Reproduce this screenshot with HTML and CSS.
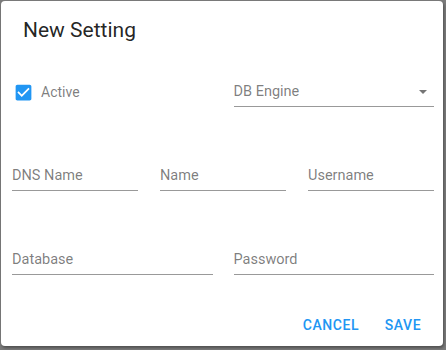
FILE: index.html
```html
<!DOCTYPE html>
<html>
<head>
<meta charset="utf-8">
<link rel="stylesheet" href="styles.css">
</head>
<body>
<div class="dialog">
  <h2 class="title">New Setting</h2>
  <div class="content">
    <div class="row two">
      <label class="check">
        <svg class="check-icon" viewBox="0 0 24 24" width="21" height="21"><path fill="#2196f3" d="M19 3H5c-1.11 0-2 .9-2 2v14c0 1.1.89 2 2 2h14c1.11 0 2-.9 2-2V5c0-1.1-.89-2-2-2zm-9 14l-5-5 1.41-1.41L10 14.17l7.59-7.59L19 8l-9 9z"/></svg>
        <span class="check-label">Active</span>
      </label>
      <div class="field select">
        <span class="placeholder">DB Engine</span>
        <svg class="arrow" viewBox="0 0 10 5" width="8" height="4"><path d="M0 0l5 5 5-5z" fill="rgba(0,0,0,0.54)"/></svg>
      </div>
    </div>
    <div class="row three">
      <div class="field"><span class="placeholder">DNS Name</span></div>
      <div class="field"><span class="placeholder">Name</span></div>
      <div class="field"><span class="placeholder">Username</span></div>
    </div>
    <div class="row two">
      <div class="field"><span class="placeholder">Database</span></div>
      <div class="field"><span class="placeholder">Password</span></div>
    </div>
  </div>
  <div class="actions">
    <button class="btn">Cancel</button>
    <button class="btn">Save</button>
  </div>
</div>
</body>
</html>
```
FILE: styles.css
```css
html, body {
  margin: 0;
  padding: 0;
}
body {
  background: #7b7b7b;
  width: 446px;
  height: 350px;
  overflow: hidden;
  font-family: Roboto, "Liberation Sans", sans-serif;
}
.dialog {
  margin: 1px 0 0 1px;
  width: 442px;
  height: 345px;
  background: #fff;
  border-radius: 4px;
  box-shadow: 1px 2px 3px rgba(0,0,0,0.35);
  display: flex;
  flex-direction: column;
  box-sizing: border-box;
}
.title {
  margin: 0;
  padding: 13px 22px 0;
  font-size: 21px;
  font-weight: 400;
  line-height: 32px;
  color: rgba(0,0,0,0.87);
}
.content {
  padding: 30px 9px 0 11px;
  display: flex;
  flex-direction: column;
  gap: 53px;
}
.row {
  display: grid;
  align-items: end;
}
.row.two {
  grid-template-columns: 1fr 1fr;
  column-gap: 21px;
}
.row.three {
  grid-template-columns: 1fr 1fr 1fr;
  column-gap: 22px;
}
.check {
  display: flex;
  align-items: center;
  height: 31px;
  align-self: start;
}
.check-icon {
  display: block;
  margin-left: 1px;
  margin-top: 1px;
}
.check-label {
  margin-left: 7px;
  font-size: 14px;
  color: rgba(0,0,0,0.52);
}
.field {
  display: flex;
  align-items: center;
  padding: 6px 0 5px;
  line-height: 19px;
  font-size: 14.5px;
  color: rgba(0,0,0,0.52);
  border-bottom: 1px solid rgba(0,0,0,0.4);
}
.field .placeholder {
  flex: 1;
}
.arrow {
  display: block;
  margin-right: 7px;
}
.actions {
  margin-top: auto;
  display: flex;
  justify-content: flex-end;
  gap: 4px;
  padding: 0 8px 3px;
}
.btn {
  border: 0;
  background: none;
  font-family: Roboto, "Liberation Sans", sans-serif;
  font-size: 14px;
  font-weight: 500;
  letter-spacing: 0.55px;
  text-transform: uppercase;
  color: #2196f3;
  padding: 6px 8px;
  height: 36px;
  min-width: 64px;
}
```
